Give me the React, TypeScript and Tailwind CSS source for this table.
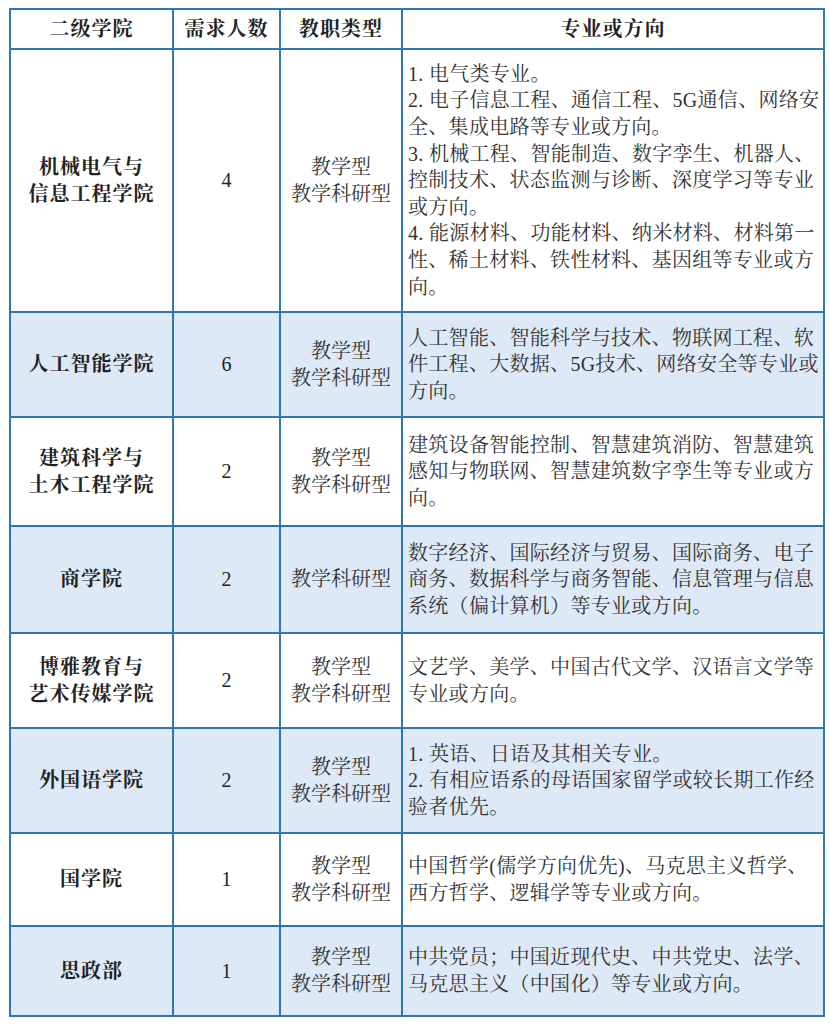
// 二级学院招聘需求表
const FONT = "font-['Liberation_Serif','Noto_Serif_CJK_SC','Noto_Sans_CJK_SC',serif]";

interface Row {
  college: string[];
  count: string;
  types: string[];
  majors: string[];
  height: string;
  shaded: boolean;
}

const ROWS: Row[] = [
  {
    college: ['机械电气与', '信息工程学院'],
    count: '4',
    types: ['教学型', '教学科研型'],
    majors: [
      '1. 电气类专业。',
      '2. 电子信息工程、通信工程、5G通信、网络安',
      '全、集成电路等专业或方向。',
      '3. 机械工程、智能制造、数字孪生、机器人、',
      '控制技术、状态监测与诊断、深度学习等专业',
      '或方向。',
      '4. 能源材料、功能材料、纳米材料、材料第一',
      '性、稀土材料、铁性材料、基因组等专业或方',
      '向。',
    ],
    height: 'h-[263px]',
    shaded: false,
  },
  {
    college: ['人工智能学院'],
    count: '6',
    types: ['教学型', '教学科研型'],
    majors: ['人工智能、智能科学与技术、物联网工程、软', '件工程、大数据、5G技术、网络安全等专业或', '方向。'],
    height: 'h-[105px]',
    shaded: true,
  },
  {
    college: ['建筑科学与', '土木工程学院'],
    count: '2',
    types: ['教学型', '教学科研型'],
    majors: ['建筑设备智能控制、智慧建筑消防、智慧建筑', '感知与物联网、智慧建筑数字孪生等专业或方', '向。'],
    height: 'h-[109px]',
    shaded: false,
  },
  {
    college: ['商学院'],
    count: '2',
    types: ['教学科研型'],
    majors: ['数字经济、国际经济与贸易、国际商务、电子', '商务、数据科学与商务智能、信息管理与信息', '系统（偏计算机）等专业或方向。'],
    height: 'h-[107px]',
    shaded: true,
  },
  {
    college: ['博雅教育与', '艺术传媒学院'],
    count: '2',
    types: ['教学型', '教学科研型'],
    majors: ['文艺学、美学、中国古代文学、汉语言文学等', '专业或方向。'],
    height: 'h-[95px]',
    shaded: false,
  },
  {
    college: ['外国语学院'],
    count: '2',
    types: ['教学型', '教学科研型'],
    majors: ['1. 英语、日语及其相关专业。', '2. 有相应语系的母语国家留学或较长期工作经', '验者优先。'],
    height: 'h-[105px]',
    shaded: true,
  },
  {
    college: ['国学院'],
    count: '1',
    types: ['教学型', '教学科研型'],
    majors: ['中国哲学(儒学方向优先)、马克思主义哲学、', '西方哲学、逻辑学等专业或方向。'],
    height: 'h-[93px]',
    shaded: false,
  },
  {
    college: ['思政部'],
    count: '1',
    types: ['教学型', '教学科研型'],
    majors: ['中共党员；中国近现代史、中共党史、法学、', '马克思主义（中国化）等专业或方向。'],
    height: 'h-[90px]',
    shaded: true,
  },
];

export default function App() {
  return (
    <div className={`min-h-screen bg-white pl-[9px] pt-[8px] text-[#222] ${FONT}`}>
      <table className="w-[814px] table-fixed border-collapse border-2 border-[#2e75b6]">
        <colgroup>
          <col className="w-[163px]" />
          <col className="w-[107px]" />
          <col className="w-[122px]" />
          <col className="w-[422px]" />
        </colgroup>
        <thead>
          <tr className="h-[40px]">
            <th className="border-2 border-[#2e75b6] text-[20px] font-bold tracking-[1px]">二级学院</th>
            <th className="border-2 border-[#2e75b6] text-[20px] font-bold tracking-[1px]">需求人数</th>
            <th className="border-2 border-[#2e75b6] text-[20px] font-bold tracking-[1px]">教职类型</th>
            <th className="border-2 border-[#2e75b6] text-[20px] font-bold tracking-[1px]">专业或方向</th>
          </tr>
        </thead>
        <tbody>
          {ROWS.map((row) => (
            <tr key={row.college.join('')} className={`${row.height} ${row.shaded ? 'bg-[#dde9f6]' : 'bg-white'}`}>
              <td className="border-2 border-[#2e75b6] text-center text-[20px] font-bold leading-[27px] tracking-[1px]">
                {row.college.map((line) => (
                  <div key={line}>{line}</div>
                ))}
              </td>
              <td className="border-2 border-[#2e75b6] text-center text-[20px] leading-[27px]">{row.count}</td>
              <td className="border-2 border-[#2e75b6] text-center text-[20px] leading-[27px] text-[#333]">
                {row.types.map((line) => (
                  <div key={line}>{line}</div>
                ))}
              </td>
              <td className="border-2 border-[#2e75b6] pl-[5px] text-[20px] leading-[26.6px] tracking-[0.3px] text-[#333]">
                {row.majors.map((line) => (
                  <div key={line} className="whitespace-nowrap">
                    {line}
                  </div>
                ))}
              </td>
            </tr>
          ))}
        </tbody>
      </table>
    </div>
  );
}
